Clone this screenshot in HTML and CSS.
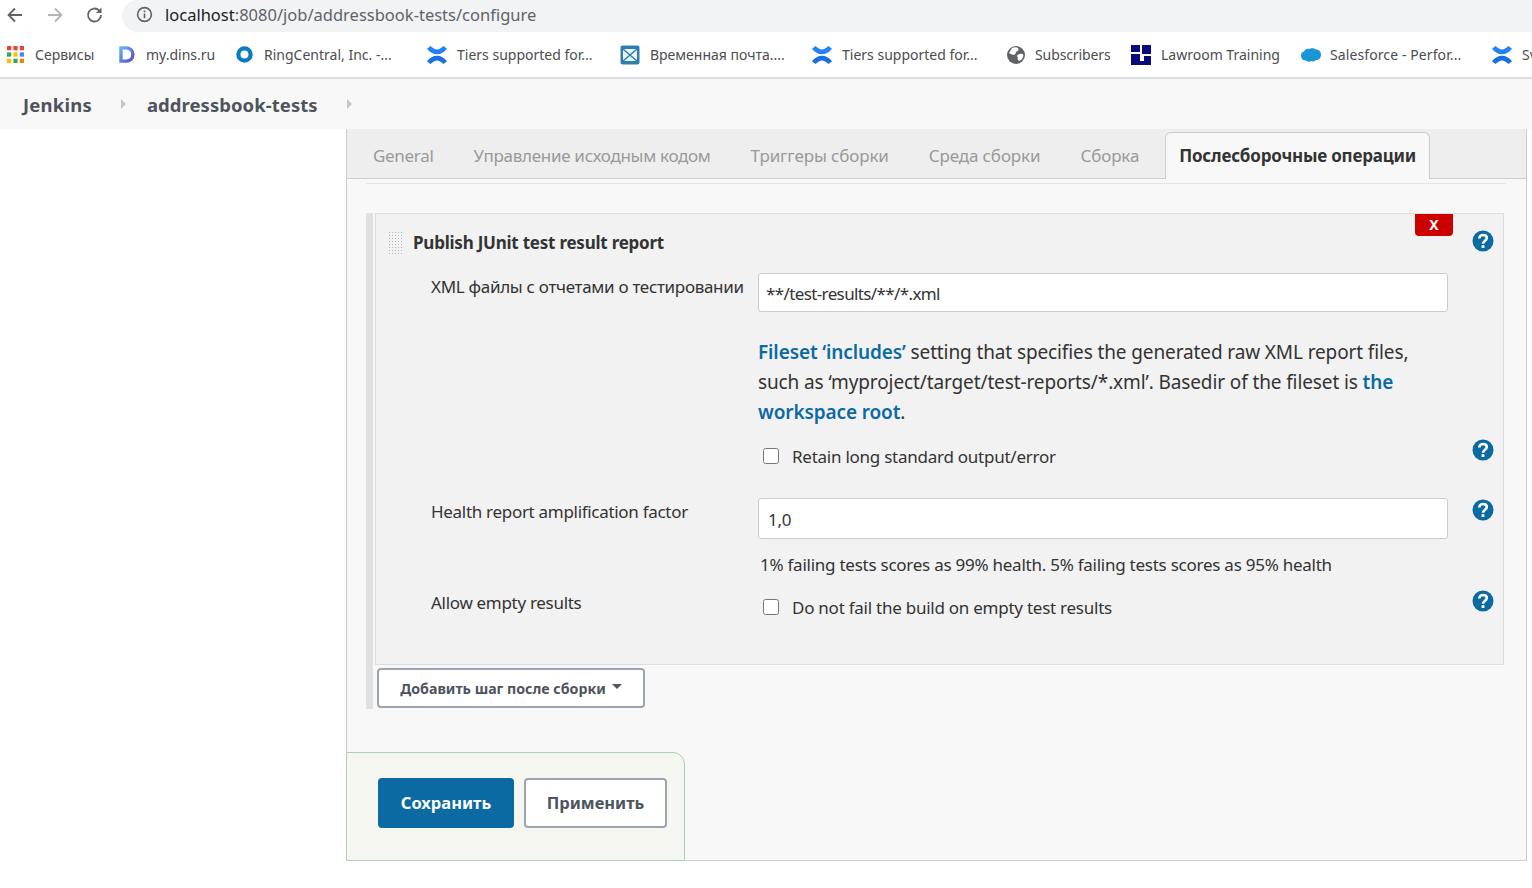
FILE: index.html
```html
<!DOCTYPE html>
<html lang="ru">
<head>
<meta charset="utf-8">
<title>addressbook-tests Config [Jenkins]</title>
<link rel="stylesheet" href="styles.css">
</head>
<body>
<svg class="defs" width="0" height="0" aria-hidden="true">
  <defs>
    <linearGradient id="dgrad" x1="0" y1="0" x2="1" y2="1">
      <stop offset="0" stop-color="#63b3ed"/>
      <stop offset="1" stop-color="#5a4fc0"/>
    </linearGradient>
  </defs>
  <symbol id="conf" viewBox="0 0 20 20">
    <path fill="#2480f5" d="M0 3.800 3.600 1C6 3.200 8 4.600 10 4.600S14 3.200 16.400 1L20 3.800C17 7.400 14 9.300 10 9.300S3 7.400 0 3.800Z"/>
    <path fill="#1b6fe6" d="M0 16.200 3.600 19C6 16.800 8 15.400 10 15.400s4 1.400 6.400 3.600L20 16.200C17 12.600 14 10.700 10 10.700S3 12.600 0 16.200Z"/>
  </symbol>
  <symbol id="help" viewBox="0 0 22 22">
    <circle cx="11" cy="11" r="10.500" fill="#0b6aa2"/>
    <path fill="none" stroke="#fff" stroke-width="2.600" d="M7.300 8.500C7.300 6.300 9 5 11.100 5c2.200 0 3.700 1.300 3.700 3.100 0 2.700-3.800 2.700-3.800 5.700"/>
    <rect x="9.600" y="15.200" width="2.800" height="2.800" fill="#fff"/>
  </symbol>
</svg>

<header class="chrome">
  <div class="toolbar">
    <svg class="nav-icon" viewBox="0 0 20 20"><path d="M17 10H4M10 3.500 3.500 10l6.500 6.500" fill="none" stroke="#5f6368" stroke-width="1.800"/></svg>
    <svg class="nav-icon" viewBox="0 0 20 20"><path d="M3 10h13M10 3.500l6.500 6.500-6.500 6.500" fill="none" stroke="#b4b6b9" stroke-width="1.800"/></svg>
    <svg class="nav-icon" viewBox="0 0 20 20"><path d="M16 10a6.500 6.500 0 1 1-1.900-4.600" fill="none" stroke="#5f6368" stroke-width="1.800"/><path d="M16.500 2.500v5.500H11Z" fill="#5f6368"/></svg>
    <div class="omnibox">
      <svg class="info" viewBox="0 0 16 16"><circle cx="8" cy="8" r="6.500" fill="none" stroke="#5f6368" stroke-width="1.500"/><path d="M8 7v4.500M8 4.300v1.500" stroke="#5f6368" stroke-width="1.500"/></svg>
      <span class="url"><span class="host">localhost</span>:8080/job/addressbook-tests/configure</span>
    </div>
  </div>
  <nav class="bookmarks">
    <a class="bm"><svg class="bm-icon" viewBox="0 0 16 16"><g fill="#ea4335"><rect x="0" y="0" width="4" height="4"/><rect x="6" y="0" width="4" height="4"/><rect x="12" y="0" width="4" height="4"/></g><g fill="#34a853"><rect x="0" y="6" width="4" height="4"/></g><rect x="6" y="6" width="4" height="4" fill="#fbbc05"/><rect x="12" y="6" width="4" height="4" fill="#4285f4"/><g fill="#fbbc05"><rect x="0" y="12" width="4" height="4"/></g><rect x="6" y="12" width="4" height="4" fill="#34a853"/><rect x="12" y="12" width="4" height="4" fill="#ea8600"/></svg><span>Сервисы</span></a>
    <a class="bm"><svg class="bm-icon" viewBox="0 0 16 16"><path d="M2.800 1.800h4.700c4 0 6.500 2.700 6.500 6.200s-2.500 6.200-6.500 6.200H2.800Z" fill="none" stroke="url(#dgrad)" stroke-width="3.200"/></svg><span>my.dins.ru</span></a>
    <a class="bm"><svg class="bm-icon" viewBox="0 0 18 18"><circle cx="9" cy="9" r="6.500" fill="none" stroke="#0b7cc1" stroke-width="4.500"/></svg><span>RingCentral, Inc. -...</span></a>
    <a class="bm"><svg class="bm-icon wide"><use href="#conf"/></svg><span>Tiers supported for...</span></a>
    <a class="bm"><svg class="bm-icon wide" viewBox="0 0 20 20"><rect x="0.500" y="0.500" width="19" height="19" rx="2" fill="#2f7fae"/><rect x="3" y="4" width="14" height="12" fill="#eaf4fa"/><path d="M3 4l14 12M17 4 3 16" stroke="#2f7fae" stroke-width="1.500"/></svg><span>Временная почта....</span></a>
    <a class="bm"><svg class="bm-icon wide"><use href="#conf"/></svg><span>Tiers supported for...</span></a>
    <a class="bm bm-tight"><svg class="bm-icon wide" viewBox="0 0 20 20"><circle cx="10" cy="10" r="9" fill="#5f6368"/><path d="M6 3c3-1 6-1 6.500 1S10 6 9.500 8.500 5.500 9.500 3 8Zm7.500 6c3-1 4.500 0 3.500 3s-4 5-5 3 .5-2-.5-3-.5-2.200 2-3Z" fill="#fff"/></svg><span>Subscribers</span></a>
    <a class="bm"><svg class="bm-icon wide" viewBox="0 0 20 20"><rect width="20" height="20" fill="#0a0a7a"/><path d="M9 0h2v9h9v2h-7v5H9V9H0V7h9Z" fill="#fff"/></svg><span>Lawroom Training</span></a>
    <a class="bm bm-wide"><svg class="bm-icon wide" viewBox="0 0 20 20"><path d="M5 15.500c-3 0-5-2-5-5 0-2 1-3.500 3-4 1-2 3-3 5-2.500C9.500 3 13 2.500 15 4.500c3 0 5 2.200 5 5.200s-2 5.300-5 5.300c-2 2-4 1.500-5 1-1 1-3 1-5-.5Z" fill="#1b96d4"/></svg><span>Salesforce - Perfor...</span></a>
    <a class="bm"><svg class="bm-icon wide"><use href="#conf"/></svg><span>Sv</span></a>
  </nav>
</header>

<div class="breadcrumbs">
  <a class="crumb first">Jenkins</a><span class="caret"></span>
  <a class="crumb second">addressbook-tests</a><span class="caret"></span>
</div>

<div class="layout">
  <aside class="side"></aside>
  <main class="panel">
    <div class="tabs">
      <a class="tab">General</a>
      <a class="tab">Управление исходным кодом</a>
      <a class="tab tab-loose">Триггеры сборки</a>
      <a class="tab tab-loose">Среда сборки</a>
      <a class="tab tab-loose">Сборка</a>
      <a class="tab active">Послесборочные операции</a>
    </div>
    <div class="content">
      <div class="section-rule"></div>
      <section class="steps">
        <div class="step">
          <a class="close">X</a>
          <div class="step-head">
            <span class="handle"></span>
            <h2 class="step-title">Publish JUnit test result report</h2>
            <svg class="help head-help"><use href="#help"/></svg>
          </div>

          <div class="row row-xml">
            <label class="label">XML файлы с отчетами о тестировании</label>
            <input class="field field-xml" type="text" value="**/test-results/**/*.xml">
          </div>

          <div class="row row-desc">
            <p class="desc"><a>Fileset ‘includes’</a> setting that specifies the generated raw XML report files, such as ‘myproject/target/test-reports/*.xml’. Basedir of the fileset is <a>the workspace root</a>.</p>
          </div>

          <div class="row row-check">
            <label class="check"><input type="checkbox"><span>Retain long standard output/error</span></label>
            <svg class="help"><use href="#help"/></svg>
          </div>

          <div class="row row-health">
            <label class="label">Health report amplification factor</label>
            <input class="field field-health" type="text" value="1,0">
            <svg class="help"><use href="#help"/></svg>
          </div>

          <div class="row row-hint">
            <p class="hint">1% failing tests scores as 99% health. 5% failing tests scores as 95% health</p>
          </div>

          <div class="row row-empty">
            <label class="label">Allow empty results</label>
            <label class="check"><input type="checkbox"><span>Do not fail the build on empty test results</span></label>
            <svg class="help"><use href="#help"/></svg>
          </div>
        </div>
        <button class="btn btn-add" type="button">Добавить шаг после сборки<span class="drop"></span></button>
      </section>
      <div class="bottom-bar">
        <button class="btn btn-save" type="button">Сохранить</button>
        <button class="btn btn-apply" type="button">Применить</button>
      </div>
    </div>
  </main>
</div>
</body>
</html>
```
FILE: styles.css
```css
* { box-sizing: border-box; }
html, body { margin: 0; padding: 0; }
body {
  width: 1532px;
  height: 888px;
  overflow: hidden;
  background: #fff;
  font-family: "Noto Sans", "Liberation Sans", sans-serif;
  color: #333;
}
.defs { position: absolute; }

/* browser chrome */
.chrome { height: 79px; border-bottom: 2px solid #dcdde0; background: #fff; }
.toolbar { height: 32px; display: flex; align-items: flex-start; padding-left: 5px; }
.nav-icon { width: 20px; height: 20px; margin: 5px 20px 0 0; flex: none; }
.toolbar .nav-icon:nth-child(3) { margin-right: 17px; }
.omnibox {
  flex: 1;
  height: 32px;
  background: #f1f3f4;
  border-radius: 16px 0 0 16px;
  display: flex;
  align-items: center;
  padding: 0 0 4px 14px;
}
.info { width: 17px; height: 17px; margin-right: 12px; }
.url { font-size: 16.500px; color: #5f6368; font-family: "Noto Sans", sans-serif; }
.host { color: #202124; }

.bookmarks {
  height: 45px;
  display: grid;
  grid-template-columns: 111px 118px 191px 193px 192px 194px 125px 170px 191px 40px;
  align-items: center;
  padding: 0 0 0 7px;
}
.bm { display: flex; align-items: center; font-size: 14px; color: #4b4d50; white-space: nowrap; overflow: hidden; }
.bm-icon { width: 17px; height: 17px; margin-right: 11px; flex: none; }
.bm-icon.wide { width: 20px; height: 20px; margin-right: 10px; }
.bm-tight { letter-spacing: -0.100px; }
.bm-tight .bm-icon.wide { margin-right: 9px; }
.bm-wide { letter-spacing: 0.100px; }
.bm-wide .bm-icon.wide { margin-right: 9px; }

/* breadcrumbs */
.breadcrumbs {
  height: 50px;
  background: #f8f8f8;
  display: flex;
  align-items: center;
  padding: 1px 0 0 23px;
}
.crumb { font-size: 18.500px; font-weight: 700; color: #4d545d; }
.crumb.first { letter-spacing: 0.200px; }
.caret {
  width: 0; height: 0;
  margin-left: 29px;
  margin-bottom: 2px;
  border-left: 5px solid #c4c6c9;
  border-top: 5px solid transparent;
  border-bottom: 5px solid transparent;
}
.crumb.second { margin-left: 21px; letter-spacing: 0.050px; }

/* main layout */
.layout { display: flex; height: 732px; }
.side { width: 346px; flex: none; }
.panel {
  width: 1181px;
  height: 732px;
  flex: none;
  display: flex;
  flex-direction: column;
  border-left: 1px solid #ccc;
  border-right: 1px solid #ccc;
  border-bottom: 1px solid #c8d6ce;
  background: #f8f8f8;
}

/* tabs */
.tabs {
  height: 50px;
  flex: none;
  display: flex;
  align-items: flex-end;
  padding: 0 0 0 6px;
  background: #eee;
  border-bottom: 1px solid #ccc;
}
.tab {
  height: 46px;
  padding: 0 20px;
  display: flex;
  align-items: center;
  font-size: 17px;
  letter-spacing: -0.300px;
  color: #999;
  white-space: nowrap;
}
.tab-loose { letter-spacing: -0.130px; }
.tab.active {
  margin: 0 0 -1px 6px;
  height: 47px;
  padding: 0 13px 1px;
  background: #f8f8f8;
  border: 1px solid #ccc;
  border-bottom: 0;
  border-radius: 6px 6px 0 0;
  color: #333;
  font-weight: 700;
  letter-spacing: -0.200px;
}

/* content */
.content { flex: 1; display: flex; flex-direction: column; min-height: 0; }
.section-rule { height: 1px; margin: 4px 20px 0 19px; background: #e4e4e4; flex: none; }
.steps {
  margin: 29px 22px 0 19px;
  padding-left: 2px;
  border-left: 7px solid #e0e0e0;
  height: 496px;
  flex: none;
}
.step {
  position: relative;
  height: 452px;
  background: #f2f2f2;
  border: 1px solid #ddd;
}
.close {
  position: absolute;
  top: 0;
  right: 50px;
  width: 38px;
  height: 22px;
  background: #c00;
  border-radius: 0 0 4px 4px;
  color: #fff;
  font-size: 14px;
  font-weight: 700;
  text-align: center;
  line-height: 21px;
}
.step-head { height: 59px; display: flex; align-items: center; position: relative; padding: 0 0 3px 12px; }
.handle {
  width: 15px;
  height: 25px;
  margin-top: 3px;
  flex: none;
  background-image: radial-gradient(circle, #b5b5b5 0.800px, transparent 1px);
  background-size: 3px 3px;
}
.step-title { margin: 0 0 0 10px; font-size: 17px; letter-spacing: -0.230px; font-weight: 700; color: #333; }
.help { width: 22px; height: 22px; flex: none; }
.row {
  display: grid;
  grid-template-columns: 382px 690px 22px;
  column-gap: 0;
}
.row .help { grid-column: 3; margin-left: 24px; }
.head-help { position: absolute; left: 1096px; top: 16px; }
.label { padding-left: 55px; font-size: 17px; letter-spacing: -0.300px; color: #333; white-space: nowrap; }
.field {
  grid-column: 2;
  width: 690px;
  height: 39px;
  padding: 1px 7px 0;
  background: #fff;
  border: 1px solid #ccc;
  border-radius: 3px;
  font: 17px "Noto Sans", sans-serif;
  letter-spacing: -0.250px;
  color: #333;
}
.field-xml { letter-spacing: -0.620px; }
.row-xml { height: 39px; }
.row-xml .label { padding-top: 2px; }
.row-desc { height: 118px; }
.desc {
  grid-column: 2 / 4;
  margin: 25px 0 0;
  width: 680px;
  font-size: 19px;
  letter-spacing: -0.115px;
  line-height: 30px;
  color: #333;
}
.desc a { color: #0b6aa2; font-weight: 600; }
.row-check { height: 68px; }
.check {
  grid-column: 2;
  display: flex;
  align-items: center;
  height: 30px;
  font-size: 17px;
  letter-spacing: -0.250px;
  color: #333;
}
.check input { width: 16px; height: 16px; margin: 0 13px 0 5px; accent-color: #0b6aa2; flex: none; }
.row-check .check { margin-top: 11px; }
.row-check .help { margin-top: 9px; }

.row-health { height: 41px; }
.row-health .label { padding-top: 2px; }
.field-health { height: 41px; padding: 1px 9px 0; }
.row-health .help { margin-top: 1px; }
.row-hint { height: 50px; }
.hint { grid-column: 2 / 4; margin: 14px 0 0 2px; font-size: 17px; letter-spacing: -0.250px; color: #333; white-space: nowrap; }
.row-empty { height: 40px; }
.row-empty .label { padding-top: 2px; }
.row-empty .check { margin-top: 3px; }
.row-empty .help { margin-top: 1px; }

/* buttons */
.btn {
  font-family: "Noto Sans", sans-serif;
  font-weight: 700;
  cursor: pointer;
  border-radius: 4px;
}
.btn-add {
  display: flex;
  align-items: center;
  justify-content: center;
  width: 268px;
  height: 40px;
  margin: 3px 0 0 2px;
  background: #fff;
  border: 2px solid #9aa5af;
  color: #4d545d;
  font-size: 14.200px;
}
.drop {
  width: 0; height: 0;
  margin-left: 6px;
  margin-bottom: 3px;
  border-top: 5px solid #4d545d;
  border-left: 5px solid transparent;
  border-right: 5px solid transparent;
}
.bottom-bar {
  margin: 43px 0 0 -1px;
  width: 339px;
  height: 109px;
  display: flex;
  align-items: center;
  gap: 10px;
  padding: 0 0 8px 31px;
  background: #f5f6ef;
  border: 1px solid #a9d0b8;
  border-radius: 0 12px 0 0;
  flex: none;
}
.btn-save {
  width: 136px;
  height: 50px;
  background: #0b6aa2;
  border: 0;
  color: #fff;
  font-size: 16.500px;
}
.btn-apply {
  width: 143px;
  height: 50px;
  background: #fff;
  border: 2px solid #9aa5af;
  color: #4d545d;
  font-size: 16.500px;
}
```
